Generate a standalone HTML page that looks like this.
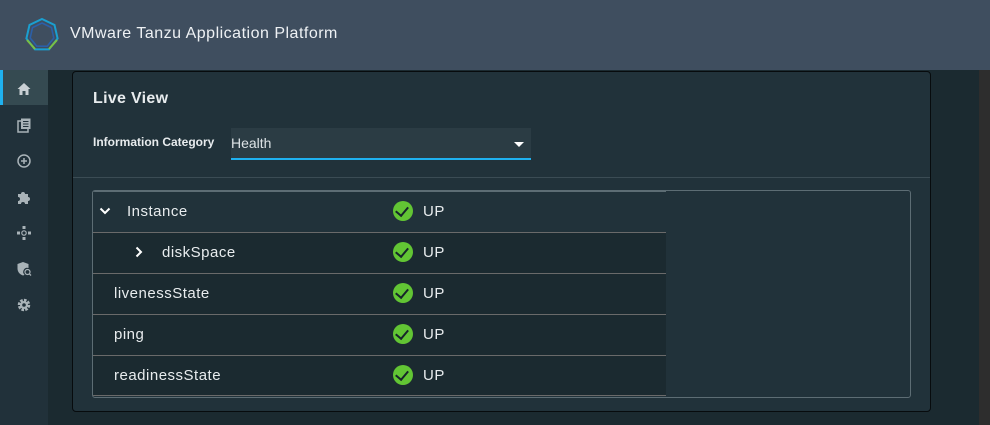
<!DOCTYPE html>
<html><head><meta charset="utf-8"><style>
*{box-sizing:border-box;margin:0;padding:0}
body{width:990px;height:425px;overflow:hidden;background:#1b2a30;font-family:"Liberation Sans",sans-serif;color:#e8ecee;position:relative}
.hdr{position:absolute;left:0;top:0;width:990px;height:70px;background:#3f4e5f}
.hdr .t{position:absolute;left:70px;top:25px;font-size:16px;letter-spacing:0.5px;color:#eef1f4}
.side{position:absolute;left:0;top:70px;width:48px;height:355px;background:#21313a}
.act{position:absolute;left:0;top:0;width:48px;height:35px;background:#354a51}
.act:before{content:"";position:absolute;left:0;top:0;width:3px;height:35px;background:#1fb1ef}
.ic{position:absolute;left:16px;width:16px;height:16px}
.strip{position:absolute;left:979px;top:70px;width:11px;height:355px;background:#2d2d2d}
.card{position:absolute;left:72px;top:71px;width:859px;height:341px;background:#21323a;border:1px solid #070b0d;border-radius:4px}
.title{position:absolute;left:93px;top:90px;font-size:16px;letter-spacing:0.3px;font-weight:bold}
.lab{position:absolute;left:93px;top:135px;font-size:12px;font-weight:bold}
.sel{position:absolute;left:231px;top:128px;width:300px;height:32px;background:#2b3c44;border-bottom:2px solid #1fb1ef;font-size:14px;padding:7px 0 0 0;color:#dde3e6}
.sel:after{content:"";position:absolute;right:7px;top:14px;border-left:5px solid transparent;border-right:5px solid transparent;border-top:5px solid #fff}
.div{position:absolute;left:73px;top:177px;width:857px;height:1px;background:#3b4c54}
.tbl{position:absolute;left:92px;top:190px;width:819px;height:208px;border:1px solid #5d6d74;border-radius:3px;background:#21323a;overflow:hidden}
.row{position:absolute;left:0;width:573px;height:41px;background:#1b2a30;border-top:1px solid #6a6a6a;font-size:15px;letter-spacing:0.5px}
.row .n{position:absolute;top:11px}
.row .s{position:absolute;left:330px;top:11px}
.ck{position:absolute;left:300px;top:9px;width:20px;height:20px;border-radius:50%;background:#62c534}
.ck:after{content:"";position:absolute;left:5px;top:3px;width:6px;height:10px;border-right:2.5px solid #16242a;border-bottom:2.5px solid #16242a;transform:rotate(40deg)}
</style></head><body>
<div class="hdr">
<svg style="position:absolute;left:24px;top:17px" width="36" height="36" viewBox="0 0 36 36">
<polygon points="18,2 30.5,8 33.6,21.5 25,32.4 11,32.4 2.4,21.5 5.5,8" fill="none" stroke="#1a9fd0" stroke-width="2"/>
<polygon points="18,6 27.5,10.6 29.8,21 23.2,29.2 12.8,29.2 6.2,21 8.5,10.6" fill="none" stroke="#2b5fa8" stroke-width="1.6"/>
<line x1="3" y1="23" x2="11" y2="32" stroke="#7bc142" stroke-width="2"/><line x1="33" y1="23" x2="25" y2="32" stroke="#7bc142" stroke-width="2"/>
</svg>
<div class="t">VMware Tanzu Application Platform</div></div>
<div class="side"><div class="act"></div>
<svg class="ic" style="top:11px" viewBox="0 0 16 16"><path d="M8 2L1.5 8H3.5V14H6.5V10H9.5V14H12.5V8H14.5Z" fill="#c9d0d4"/></svg>
<svg class="ic" style="top:47px" viewBox="0 0 16 16"><rect x="2" y="4" width="10" height="11" fill="none" stroke="#a9b3b8" stroke-width="1.5"/><rect x="5" y="1.5" width="9.5" height="10.5" fill="#a9b3b8"/><path d="M7 4.5h5.5M7 7h5.5M7 9.5h5.5" stroke="#21313a" stroke-width="1"/></svg>
<svg class="ic" style="top:83px" viewBox="0 0 16 16"><circle cx="8" cy="8" r="6" fill="none" stroke="#a9b3b8" stroke-width="1.5"/><path d="M8 5v6M5 8h6" stroke="#a9b3b8" stroke-width="1.5"/></svg>
<svg class="ic" style="top:119px" viewBox="0 0 16 16"><path d="M2 5h3a2 2 0 1 1 4 0h3v3a2 2 0 1 1 0 4v3H9a2 2 0 1 0-4 0H2v-3a2 2 0 1 0 0-4z" fill="#a9b3b8"/></svg>
<svg class="ic" style="top:155px" viewBox="0 0 16 16"><rect x="6.5" y="1" width="3" height="3" fill="#a9b3b8"/><rect x="6.5" y="12" width="3" height="3" fill="#a9b3b8"/><rect x="1" y="6.5" width="3" height="3" fill="#a9b3b8"/><rect x="12" y="6.5" width="3" height="3" fill="#a9b3b8"/><circle cx="8" cy="8" r="2.2" fill="none" stroke="#a9b3b8" stroke-width="1.2"/></svg>
<svg class="ic" style="top:191px" viewBox="0 0 16 16"><path d="M7 1L1.5 3v4.5C1.5 11 4 13.5 7 14.5 7.5 14.3 8 14 8.5 13.7 A4 4 0 0 1 12.5 7V3Z" fill="#a9b3b8"/><circle cx="11.5" cy="11" r="2.5" fill="none" stroke="#a9b3b8" stroke-width="1.2"/><path d="M13.3 12.8L15 14.5" stroke="#a9b3b8" stroke-width="1.3"/></svg>
<svg class="ic" style="top:227px" viewBox="0 0 16 16"><circle cx="8" cy="8" r="4.5" fill="none" stroke="#a9b3b8" stroke-width="3.5" stroke-dasharray="2.4 1.1"/><circle cx="8" cy="8" r="4" fill="#a9b3b8"/><circle cx="8" cy="8" r="1.8" fill="#21313a"/></svg>
</div>
<div class="strip"></div>
<div class="card"></div>
<div class="title">Live View</div>
<div class="lab">Information Category</div>
<div class="sel">Health</div>
<div class="div"></div>
<div class="tbl">
<div class="row" style="top:-1px;background:#21323a;border-top:2px solid #5d6d74"><svg style="position:absolute;left:6px;top:14px" width="12" height="10" viewBox="0 0 12 10"><path d="M1.5 2.5L6 7l4.5-4.5" fill="none" stroke="#fff" stroke-width="2"/></svg><span class="n" style="left:34px">Instance</span><span class="ck"></span><span class="s">UP</span></div>
<div class="row" style="top:41px"><svg style="position:absolute;left:41px;top:13px" width="10" height="12" viewBox="0 0 10 12"><path d="M2.5 1.5L7 6l-4.5 4.5" fill="none" stroke="#fff" stroke-width="2"/></svg><span class="n" style="left:69px">diskSpace</span><span class="ck"></span><span class="s">UP</span></div>
<div class="row" style="top:82px"><span class="n" style="left:21px">livenessState</span><span class="ck"></span><span class="s">UP</span></div>
<div class="row" style="top:123px"><span class="n" style="left:21px">ping</span><span class="ck"></span><span class="s">UP</span></div>
<div class="row" style="top:164px;border-bottom:1px solid #6a6a6a"><span class="n" style="left:21px">readinessState</span><span class="ck"></span><span class="s">UP</span></div>
</div>
</body></html>
